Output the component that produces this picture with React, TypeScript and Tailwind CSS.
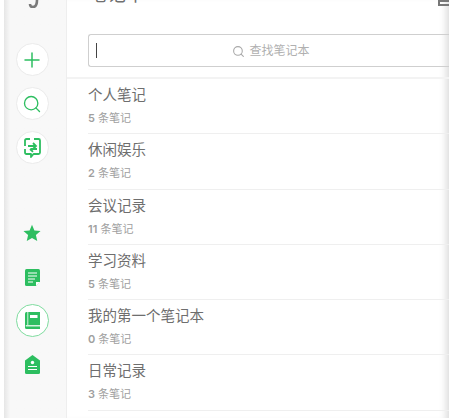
import React from "react";
import { Plus, Search } from "lucide-react";

const notebooks = [
  { name: "个人笔记", count: 5 },
  { name: "休闲娱乐", count: 2 },
  { name: "会议记录", count: 11 },
  { name: "学习资料", count: 5 },
  { name: "我的第一个笔记本", count: 0 },
  { name: "日常记录", count: 3 },
];

const fontStack = "font-['Inter','Noto_Sans_CJK_SC',sans-serif]";

const RoundButton: React.FC<{ children: React.ReactNode; active?: boolean }> = ({ children, active }) => (
  <div
    className={
      "w-[33px] h-[33px] rounded-full bg-white flex items-center justify-center border " +
      (active ? "border-[#7fdc9f]" : "border-[#ebebeb]")
    }
  >
    {children}
  </div>
);

const Sidebar = () => (
  <div className="w-[63px] shrink-0 h-full bg-[#f8f8f8] bg-gradient-to-r from-[#e6e6e6] from-0% to-[#f8f8f8] to-[10%] border-r border-[#eeeeee] flex flex-col items-center pr-[6px]">
    {/* logo cut by the top edge */}
    <svg width="14" height="8" viewBox="0 0 14 8" className="ml-[5px]">
      <path d="M9 0 C9 5 8 7 5 7 C3 7 2 6 2 4" fill="none" stroke="#7a7a7a" strokeWidth="2.6" />
    </svg>
    <div className="mt-[35px] flex flex-col gap-[11px]">
      <RoundButton>
        <Plus className="w-[24px] h-[24px] text-[#2dbe60]" strokeWidth={1.5} />
      </RoundButton>
      <RoundButton>
        <Search className="w-[20px] h-[20px] text-[#2dbe60]" strokeWidth={1.6} />
      </RoundButton>
      <RoundButton>
        <svg width="19" height="22" viewBox="0 0 19 22" fill="none" stroke="#2dbe60" strokeWidth="1.8">
          <path d="M11 2 H15.5 Q17 2 17 3.5 V15.5 Q17 17 15.5 17 H10.5 L8 20 V17 H3.5 Q2 17 2 15.5 V12" strokeLinejoin="round" />
          <path d="M2 9 V3.5 Q2 2 3.5 2 H7" />
          <path d="M5 9 H12.5 M10 6 L13 9 L10 12" />
          <path d="M14 12 H7.5 M10 14.8 L7 12" />
        </svg>
      </RoundButton>
    </div>
    <div className="mt-[60px] flex flex-col items-center">
      <svg width="18" height="18" viewBox="0 0 24 24" fill="#2dbe60">
        <path d="M12 1 L15.2 8.6 L23.4 9.3 L17.2 14.7 L19 22.8 L12 18.5 L5 22.8 L6.8 14.7 L0.6 9.3 L8.8 8.6 Z" />
      </svg>
      <svg width="15" height="17" viewBox="0 0 15 17" className="mt-[27px]">
        <path d="M1.5 0 H13.5 Q15 0 15 1.5 V12.5 L11 17 H1.5 Q0 17 0 15.5 V1.5 Q0 0 1.5 0 Z" fill="#2dbe60" />
        <path d="M3 4 H12 M3 7 H12 M3 10 H10 M3 13 H8" stroke="#fff" strokeWidth="1" />
        <path d="M11 13 H15 L11 17 Z" fill="#fff" />
      </svg>
      <div className="mt-[18px]">
        <RoundButton active>
          <svg width="15" height="17" viewBox="0 0 15 17">
            <path d="M1.5 0 H15 V17 H1.5 Q0 17 0 15.5 V1.5 Q0 0 1.5 0 Z" fill="#2dbe60" />
            <path d="M5 3 H12.5 V6 H5 Z" fill="#fff" />
            <path d="M0.8 13.8 H15" stroke="#fff" strokeWidth="1.2" />
            <path d="M2.8 0 V13" stroke="#fff" strokeWidth="0.8" />
          </svg>
        </RoundButton>
      </div>
      <svg width="15" height="19" viewBox="0 0 15 19" className="mt-[18px]">
        <path d="M7.5 0 L15 5.5 V17.5 Q15 19 13.5 19 H1.5 Q0 19 0 17.5 V5.5 Z" fill="#2dbe60" />
        <circle cx="7.5" cy="7.5" r="1.7" fill="#fff" />
        <path d="M3 11.5 H12 M3 14.5 H12" stroke="#fff" strokeWidth="1.1" />
      </svg>
    </div>
  </div>
);

export default function App() {
  return (
    <div className={"w-[459px] h-[418px] overflow-hidden bg-white flex " + fontStack}>
      <div className="w-[4px] shrink-0" />
      <Sidebar />
      <div className="w-[382px] shrink-0 h-full bg-white shadow-[inset_-8px_0_7px_-5px_rgba(0,0,0,0.14)]">
        <div className="h-[79px] border-b-2 border-[#f3f3f3] flex flex-col">
          <div className="h-[6px] overflow-hidden flex items-end justify-between pl-[21px]">
            <span className="text-[19px] leading-[22px] text-[#707070] whitespace-nowrap">笔记本</span>
            <span className="w-[11px] h-[6px] border-y-2 border-l-2 border-[#777777]" />
          </div>
          <div className="mt-[28px] ml-[21px] h-[33px] border border-[#cfcfcf] border-r-0 rounded-l-[3px] flex items-center">
            <span className="ml-[7px] w-px h-[15px] bg-[#444444]" />
            <div className="flex-1 flex items-center justify-center gap-[4px] pr-[4px] mt-[1px] text-[12px] text-[#b0b0b0]">
              <Search className="w-[13px] h-[13px] text-[#a9a9a9]" strokeWidth={2} />
              <span>查找笔记本</span>
            </div>
          </div>
        </div>
        <div className="pl-[21px]">
          {notebooks.map((nb) => (
            <div key={nb.name} className="h-[55.3px] border-b border-[#efefef] pt-[6px]">
              <div className="text-[14.5px] leading-[20px] text-[#6e6e6e] whitespace-nowrap">{nb.name}</div>
              <div className="mt-[6px] text-[11px] leading-[14px] text-[#9f9f9f] whitespace-nowrap">
                <span className="font-semibold">{nb.count}</span> 条笔记
              </div>
            </div>
          ))}
        </div>
      </div>
    </div>
  );
}
